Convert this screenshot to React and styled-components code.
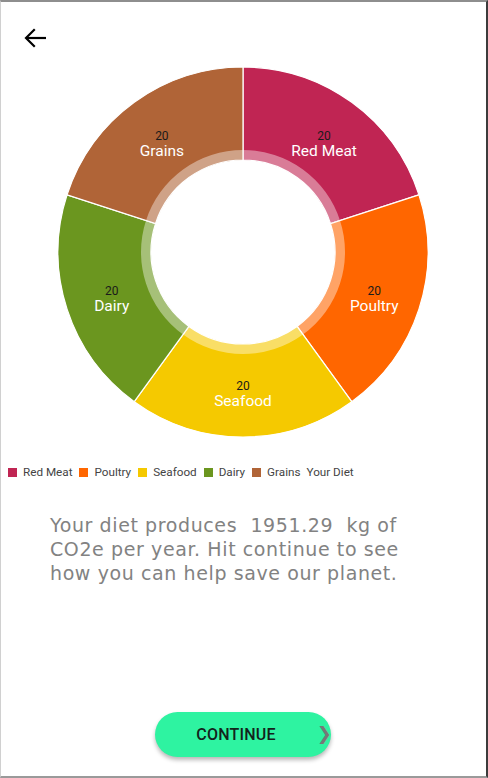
import React from "react";
import styled, { createGlobalStyle } from "styled-components";

const Global = createGlobalStyle`
  html, body { margin: 0; padding: 0; background: #fff; }
  body { font-family: Roboto, "Liberation Sans", sans-serif; }
  * { box-sizing: border-box; }
`;

const Frame = styled.div`
  width: 488px;
  height: 778px;
  border-top: 2px solid #8e8e8e;
  border-left: 1px solid #d0d0d0;
  border-right: 2px solid #3c3c3c;
  border-bottom: 2px solid #9a9a9a;
  display: flex;
  flex-direction: column;
  overflow: hidden;
`;

const Header = styled.div`
  height: 64px;
  padding: 24px 0 0 20px;
`;

const BackButton = styled.button`
  border: none;
  background: transparent;
  padding: 0;
  width: 28px;
  height: 24px;
  display: flex;
  align-items: center;
  justify-content: center;
  cursor: pointer;
`;

const ChartWrap = styled.div`
  display: flex;
  justify-content: center;
  padding-right: 1px;
`;

const Legend = styled.div`
  display: flex;
  align-items: center;
  margin-top: 27px;
  padding-left: 7px;
  height: 14px;
  font-size: 11.7px;
  color: #444;
`;

const LegendItem = styled.div`
  display: flex;
  align-items: center;
  gap: 6px;
  margin-right: 7px;
`;

const Swatch = styled.span`
  width: 9px;
  height: 9px;
  background: ${(p) => p.$color};
  display: inline-block;
`;

const LegendTitle = styled.span`
  margin-left: -1px;
`;

const Message = styled.p`
  margin: 34px 0 0 49px;
  width: 410px;
  font-family: "DejaVu Sans", "Liberation Sans", sans-serif;
  font-size: 19px;
  line-height: 24px;
  color: #828282;
  letter-spacing: 0.6px;
  white-space: nowrap;
`;

const Spacer = styled.div`
  flex: 1;
`;

const ContinueButton = styled.button`
  position: relative;
  align-self: flex-start;
  margin: 0 0 19px 154px;
  width: 176px;
  height: 45px;
  border: none;
  border-radius: 23px;
  background: #2ef3a1;
  box-shadow: 0 3px 4px rgba(0, 0, 0, 0.28);
  font-family: Roboto, "Liberation Sans", sans-serif;
  font-weight: 500;
  font-size: 16px;
  color: #13231b;
  letter-spacing: 0.2px;
  padding: 0 14px 0 0;
  cursor: pointer;
`;

const Chevron = styled.span`
  position: absolute;
  right: -1px;
  top: 12px;
  font-size: 18px;
  line-height: 20px;
  color: #777;
  font-family: "DejaVu Sans", sans-serif;
`;

const data = [
  { name: "Red Meat", color: "#c02553", value: 20 },
  { name: "Poultry", color: "#ff6600", value: 20 },
  { name: "Seafood", color: "#f5c900", value: 20 },
  { name: "Dairy", color: "#6b961f", value: 20 },
  { name: "Grains", color: "#b06437", value: 20 },
];

const C = 186;
const RO = 185;
const RM = 102;
const RI = 92;

function pt(r, a) {
  const rad = (a * Math.PI) / 180;
  return [C + r * Math.sin(rad), C - r * Math.cos(rad)];
}

function arcPath(r1, r2, a1, a2) {
  const [x1, y1] = pt(r2, a1);
  const [x2, y2] = pt(r2, a2);
  const [x3, y3] = pt(r1, a2);
  const [x4, y4] = pt(r1, a1);
  const large = a2 - a1 > 180 ? 1 : 0;
  return `M${x1} ${y1} A${r2} ${r2} 0 ${large} 1 ${x2} ${y2} L${x3} ${y3} A${r1} ${r1} 0 ${large} 0 ${x4} ${y4} Z`;
}

function Donut() {
  const total = data.reduce((s, d) => s + d.value, 0);
  let acc = 0;
  const segs = data.map((d) => {
    const a1 = (acc / total) * 360;
    acc += d.value;
    const a2 = (acc / total) * 360;
    return { ...d, a1, a2 };
  });
  return (
    <svg width={C * 2} height={C * 2} viewBox={`0 0 ${C * 2} ${C * 2}`}>
      {segs.map((s) => (
        <g key={s.name}>
          <path d={arcPath(RI, RO, s.a1, s.a2)} fill={s.color} stroke="#fff" strokeWidth="1.2" />
          <path d={arcPath(RI, RM, s.a1, s.a2)} fill="#fff" fillOpacity="0.4" />
        </g>
      ))}
      {segs.map((s) => {
        const [x, y] = pt(138, (s.a1 + s.a2) / 2);
        return (
          <g key={s.name + "l"} fontFamily="Roboto, 'Liberation Sans', sans-serif" textAnchor="middle">
            <text x={x} y={y} fontSize="12" fill="#1a1a1a">
              {s.value}
            </text>
            <text x={x} y={y + 16} fontSize="15.5" fill="#fff">
              {s.name}
            </text>
          </g>
        );
      })}
    </svg>
  );
}

export default function App() {
  return (
    <>
      <Global />
      <Frame>
        <Header>
          <BackButton aria-label="Back">
            <svg width="24" height="20" viewBox="0 0 24 20">
              <path d="M23 10H3" stroke="#000" strokeWidth="2.2" fill="none" />
              <path d="M11 2L3 10l8 8" stroke="#000" strokeWidth="2.2" fill="none" strokeLinecap="square" />
            </svg>
          </BackButton>
        </Header>
        <ChartWrap>
          <Donut />
        </ChartWrap>
        <Legend>
          {data.map((d) => (
            <LegendItem key={d.name}>
              <Swatch $color={d.color} />
              <span>{d.name}</span>
            </LegendItem>
          ))}
          <LegendTitle>Your Diet</LegendTitle>
        </Legend>
        <Message>
          Your diet produces&nbsp; 1951.29&nbsp; kg of
          <br />
          CO2e per year. Hit continue to see
          <br />
          how you can help save our planet.
        </Message>
        <Spacer />
        <ContinueButton>
          CONTINUE
          <Chevron>❯</Chevron>
        </ContinueButton>
      </Frame>
    </>
  );
}
